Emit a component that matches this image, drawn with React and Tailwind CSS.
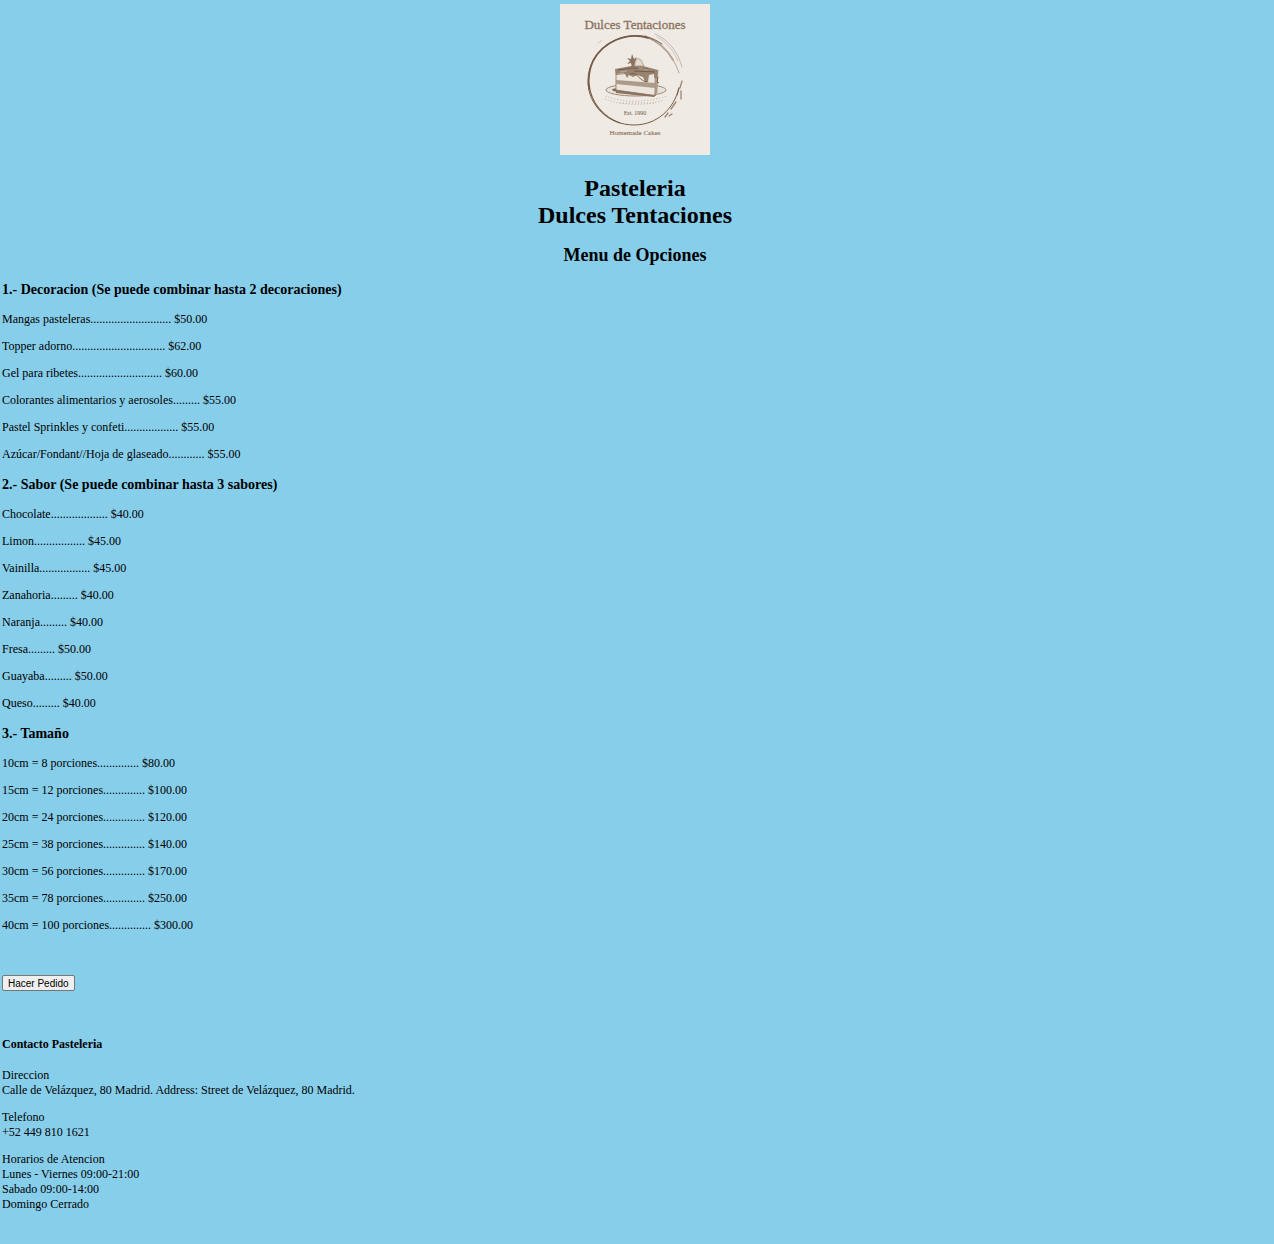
const decoraciones = [
  "Mangas pasteleras........................... $50.00",
  "Topper adorno............................... $62.00",
  "Gel para ribetes............................ $60.00",
  "Colorantes alimentarios y aerosoles......... $55.00",
  "Pastel Sprinkles y confeti.................. $55.00",
  "Azúcar/Fondant//Hoja de glaseado............ $55.00",
];

const sabores = [
  "Chocolate................... $40.00",
  "Limon................. $45.00",
  "Vainilla................. $45.00",
  "Zanahoria......... $40.00",
  "Naranja......... $40.00",
  "Fresa......... $50.00",
  "Guayaba......... $50.00",
  "Queso......... $40.00",
];

const tamanos = [
  "10cm = 8 porciones.............. $80.00",
  "15cm = 12 porciones.............. $100.00",
  "20cm = 24 porciones.............. $120.00",
  "25cm = 38 porciones.............. $140.00",
  "30cm = 56 porciones.............. $170.00",
  "35cm = 78 porciones.............. $250.00",
  "40cm = 100 porciones.............. $300.00",
];

function Logo() {
  return (
    <svg
      viewBox="0 0 150 151"
      role="img"
      aria-label="Dulces Tentaciones"
      className="mx-auto block h-[151px] w-[150px] bg-[#efeae4] font-['Liberation_Serif',serif]"
    >
      <defs>
        <filter id="soft" x="-5%" y="-5%" width="110%" height="110%">
          <feGaussianBlur stdDeviation="0.4" />
        </filter>
      </defs>

      <g fill="#8b7360" textAnchor="middle">
        <text x="75" y="25" fontSize="13" stroke="#8b7360" strokeWidth="0.3">Dulces Tentaciones</text>
        <text x="75" y="111" fontSize="6" stroke="#8b7360" strokeWidth="0.1">Est. 1990</text>
        <text x="75" y="131" fontSize="7" stroke="#8b7360" strokeWidth="0.1">Homemade Cakes</text>
      </g>

      <g filter="url(#soft)">
        {/* Brushed ring */}
        <g fill="none" stroke="#765b45" strokeLinecap="round">
          <path d="M102 40C92 33 82 31 73 32C48 33 28 52 28 77C28 102 49 121 74 121C97 121 114 105 119 84" strokeWidth="1" />
          <path d="M88 34C67 27 43 38 33 57C29 66 28 76 29 85" strokeWidth="1.7" />
          <path d="M29 80C31 99 43 113 60 119" strokeWidth="1.2" />
          <path d="M82 32C98 36 112 48 119 69" strokeWidth="0.8" opacity="0.6" />
          <path d="M85 32C98 37 107 45 113 56" strokeWidth="2.2" opacity="0.3" />
          <path d="M95 30C109 36 118 48 122 63" strokeWidth="0.8" opacity="0.45" />
          <path d="M97 33C108 39 114 48 118 57" strokeWidth="0.7" opacity="0.35" />
          <path d="M119 84L117 91M122 77L120 84M121 87L121 95M116 98L111 105M108 109L105 113M112 110L109 112" strokeWidth="1.3" opacity="0.7" />
          <path d="M38 39L42 36" strokeWidth="0.7" opacity="0.35" />
        </g>

        {/* Plate and crumbs */}
        <ellipse cx="76" cy="86" rx="30" ry="6" fill="#e9e2da" stroke="#8b7360" strokeWidth="0.8" />
        <g fill="none" stroke="#8b7360" strokeWidth="1" strokeDasharray="1 2" opacity="0.5">
          <path d="M46 92C62 99 87 99 107 92" />
          <path d="M45 95C62 102 88 102 104 96" />
          <path d="M60 99L94 99" />
        </g>
        <path d="M52 85L58 84L58 88L53 87Z" fill="#83695a" />

        {/* Slice with its layers */}
        <path d="M56 66L96 69L95 92L56 86Z" fill="#ece5dc" stroke="#8b7360" strokeWidth="0.8" />
        <path d="M95 70L98 66L97 88L95 92Z" fill="#b5a492" stroke="#8b7360" strokeWidth="0.5" />
        <path d="M56 76L95 79L95 84L56 80Z" fill="#ac9b8a" />
        <path d="M56 86L95 91L94 93L56 89Z" fill="#8b7360" />
        <path d="M55 65L71 62L83 62L98 66L97 74L94 74L94 70L89 71L88 78L85 78L83 73L77 71L73 73L69 71L67 74L65 70L56 71Z" fill="#988371" />
        <path d="M58 66L72 64L88 65M74 67L95 68M70 70C77 67 79 77 87 78M98 73L97 78L99 79" fill="none" stroke="#6b503c" strokeWidth="0.8" />
        <path d="M60 68L67 67M78 64L88 66M58 70L64 69" fill="none" stroke="#c8b9a9" strokeWidth="0.7" />

        {/* Fruit and leaf on top */}
        <path d="M75 62C74 56 78 53 81 56L84 62Z" fill="#e3dacf" stroke="#a08c79" strokeWidth="0.7" />
        <path d="M72 64L71 59L67 60L70 57L67 54L71 55L72 50L74 55L77 53L75 58L74 64Z" fill="#8b7360" />
      </g>
    </svg>
  );
}

function Seccion({ titulo, opciones }) {
  return (
    <section className="flex flex-col gap-3 pt-[15px]">
      <h3 className="pb-0.5 text-sm leading-4 font-bold">{titulo}</h3>
      {opciones.map((opcion) => (
        <p key={opcion}>{opcion}</p>
      ))}
    </section>
  );
}

export default function App() {
  return (
    <div className="min-h-screen bg-[#87ceeb] pt-1 pr-1.5 pb-8 pl-0.5 font-['Liberation_Serif','Times_New_Roman',serif] text-xs leading-[15px] text-black">
      <header className="text-center">
        <Logo />
        <h1 className="mt-5 text-2xl leading-[27px] font-bold">
          Pasteleria
          <br />
          Dulces Tentaciones
        </h1>
        <h2 className="mt-4 text-lg leading-5 font-bold">Menu de Opciones</h2>
      </header>

      <main className="pt-0.5">
        <Seccion titulo="1.- Decoracion (Se puede combinar hasta 2 decoraciones)" opciones={decoraciones} />
        <Seccion titulo="2.- Sabor (Se puede combinar hasta 3 sabores)" opciones={sabores} />
        <Seccion titulo="3.- Tamaño" opciones={tamanos} />
        <button
          type="button"
          className="mt-[42px] block h-4 rounded-xs border border-[#767676] bg-[#efefef] px-[5px] pt-px font-['Liberation_Sans',Arial,sans-serif] text-[10px] leading-[14px]"
        >
          Hacer Pedido
        </button>
      </main>

      <footer className="mt-[46px] flex flex-col gap-3">
        <h4 className="pb-1 font-bold">Contacto Pasteleria</h4>
        <p>
          Direccion
          <br />
          Calle de Velázquez, 80 Madrid. Address: Street de Velázquez, 80 Madrid.
        </p>
        <p>
          Telefono
          <br />
          +52 449 810 1621
        </p>
        <p>
          Horarios de Atencion
          <br />
          Lunes - Viernes 09:00-21:00
          <br />
          Sabado 09:00-14:00
          <br />
          Domingo Cerrado
        </p>
      </footer>
    </div>
  );
}
